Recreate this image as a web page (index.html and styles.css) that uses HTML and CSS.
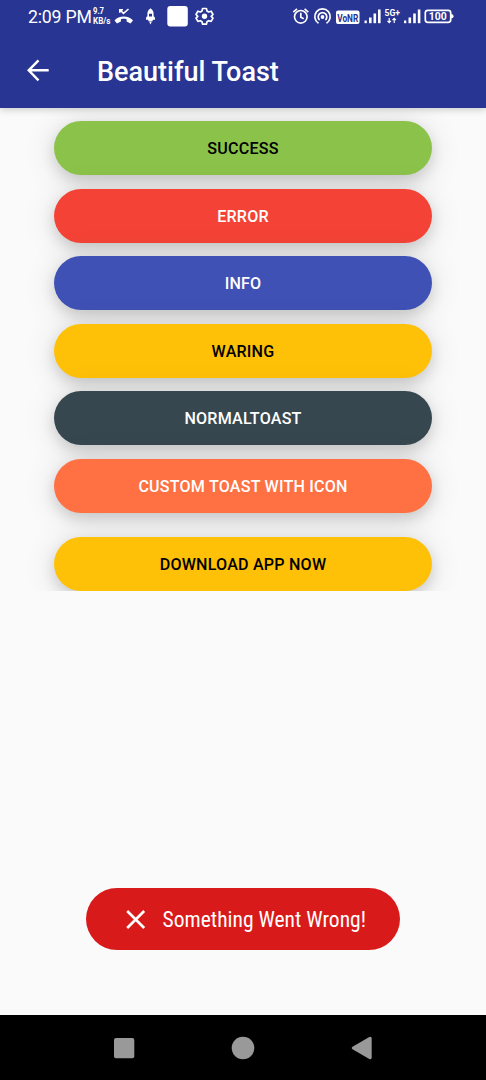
FILE: index.html
```html
<!DOCTYPE html>
<html lang="en">
<head>
<meta charset="utf-8">
<title>Beautiful Toast</title>
<link rel="stylesheet" href="styles.css">
</head>
<body>
<div class="screen">
  <header class="top">
    <div class="status">
      <span class="clock">2:09 PM</span>
      <svg class="speed" width="19" height="34" viewBox="0 0 19 34" fill="#fff">
        <text x="0" y="14" textLength="11" lengthAdjust="spacingAndGlyphs">9.7</text>
        <text x="0" y="24" textLength="17.500" lengthAdjust="spacingAndGlyphs">KB/s</text>
      </svg>
      <svg class="notices" width="106" height="34" viewBox="0 0 106 34" fill="#fff">
        <path d="M4.500 20.500C8.500 15.300 19 15.300 23 20.500L20.500 23.600L16.600 21.500V19.300C15 18.700 12.500 18.700 10.900 19.300V21.500L7 23.600Z"/>
        <path d="M9.800 12.800V9.700H13M9.800 9.700L13.500 13.300L18.500 9" fill="none" stroke="#fff" stroke-width="1.600"/>
        <path fill-rule="evenodd" d="M40.500 8.200C43.200 10 43.600 12 43.600 14V16L45 17.800V19.700H43L42.200 21.500H38.800L38 19.700H36V17.800L37.400 16V14C37.400 12 37.800 10 40.500 8.200ZM39 13.800V16.500H42V13.800Z"/>
        <path d="M39.300 22H41.700L40.500 24.500Z"/>
        <rect x="57.300" y="6" width="20.500" height="20.500" rx="3"/>
        <path d="M92.600 8.500H96.400L97 11L98.600 12L101.100 11.200L103 14.500L101.200 16.300L103 18.100L101.100 21.400L98.600 20.700L97 21.700L96.400 24.200H92.600L92 21.700L90.400 20.700L87.900 21.400L86 18.100L87.800 16.300L86 14.500L87.900 11.200L90.400 12L92 11Z" fill="none" stroke="#fff" stroke-width="1.700" stroke-linejoin="round"/>
        <circle cx="94.500" cy="16.300" r="2.700"/>
      </svg>
      <svg class="signals" width="166" height="34" viewBox="290 0 166 34" fill="#fff">
        <g fill="none" stroke="#fff" stroke-width="1.700">
          <circle cx="300.800" cy="16.800" r="6.300"/>
          <path d="M300.800 12.800V17.300L303.700 18.800M293.300 12.100L297 8.900M308.300 12.100L304.600 8.900"/>
          <path d="M318.500 23.200A7.700 7.700 0 1 1 326.500 23.200M319.600 20A4.300 4.300 0 1 1 325.400 20"/>
        </g>
        <circle cx="322.500" cy="17" r="1.900"/>
        <rect x="336" y="10.500" width="23.500" height="13.500" rx="2"/>
        <text class="vonr" x="337.200" y="21.500" textLength="21" lengthAdjust="spacingAndGlyphs">VoNR</text>
        <rect x="364.500" y="20.500" width="2.300" height="2.700"/><rect x="369" y="17.500" width="2.600" height="5.700"/><rect x="373.500" y="13.500" width="2.600" height="9.700"/><rect x="378" y="9.500" width="2.600" height="13.700"/>
        <text class="gen" x="384.500" y="16.300" textLength="15.500" lengthAdjust="spacingAndGlyphs">5G+</text>
        <path d="M389.200 18V22.500M387.500 20.800L389.200 22.700L390.900 20.800M394.200 23V18.500M392.500 20.200L394.200 18.300L395.900 20.200" fill="none" stroke="#fff" stroke-width="1.200"/>
        <rect x="404" y="20.500" width="2.300" height="2.700"/><rect x="408.500" y="17.500" width="2.600" height="5.700"/><rect x="413.200" y="13.500" width="2.600" height="9.700"/><rect x="417.800" y="9.500" width="2.600" height="13.700"/>
        <rect x="425.300" y="10.300" width="25.400" height="12" rx="2.500" fill="none" stroke="#fff" stroke-width="1.700"/>
        <path d="M451 14.300H452Q453.500 14.300 453.500 16.300T452 18.300H451Z"/>
        <text class="level" x="428.800" y="20.200" textLength="18" lengthAdjust="spacingAndGlyphs">100</text>
      </svg>
    </div>
    <div class="appbar">
      <svg class="back" width="24" height="24" viewBox="0 0 24 24" fill="none" stroke="#fff" stroke-width="2.400"><path d="M22.700 12.300H3M12.500 2.300L2.700 12.300L12.500 22.300"/></svg>
      <h1 class="title">Beautiful Toast</h1>
    </div>
  </header>
  <main class="content">
    <div class="buttons">
      <button class="btn success">SUCCESS</button>
      <button class="btn error">ERROR</button>
      <button class="btn info">INFO</button>
      <button class="btn warning">WARING</button>
      <button class="btn normal">NORMALTOAST</button>
      <button class="btn custom">CUSTOM TOAST WITH ICON</button>
      <button class="btn warning download">DOWNLOAD APP NOW</button>
    </div>
    <div class="toast">
      <svg class="cross" width="20" height="20" viewBox="0 0 20 20" fill="none" stroke="#fff" stroke-width="2.600"><path d="M1.200 2L18.200 19M18.200 2L1.200 19"/></svg>
      <svg class="message" width="220" height="40" viewBox="0 0 220 40"><text x="0.500" y="28" textLength="203.500" lengthAdjust="spacingAndGlyphs">Something Went Wrong!</text></svg>
    </div>
  </main>
  <nav class="nav">
    <svg width="24" height="24" viewBox="0 0 24 24"><rect x="2" y="2" width="20.300" height="20.300" rx="2"/></svg>
    <svg width="24" height="24" viewBox="0 0 24 24"><circle cx="12" cy="12" r="11.300"/></svg>
    <svg width="24" height="24" viewBox="0 0 24 24"><path d="M2.500 10.800L19.300 1Q21.700 0 21.700 2.500V21.500Q21.700 24 19.300 23L2.500 13.200Q.8 12 2.500 10.800Z"/></svg>
  </nav>
</div>
</body>
</html>
```
FILE: styles.css
```css
* { box-sizing: border-box; }

body {
  margin: 0;
  font-family: Roboto, "Liberation Sans", sans-serif;
}

.screen {
  display: flex;
  flex-direction: column;
  width: 486px;
  height: 1080px;
  background: #fafafa;
}

.top {
  height: 108px;
  background: #283593;
  color: #fff;
  box-shadow: 0 2px 7px rgba(0, 0, 0, .18);
}

.status {
  display: flex;
  height: 34px;
  padding-left: 28px;
}

.clock {
  width: 65px;
  font-size: 17.700px;
  letter-spacing: -.2px;
  line-height: 34px;
  white-space: nowrap;
}

.speed {
  margin-right: -2px;
  font-size: 8.500px;
  font-weight: 700;
}

.signals { margin-left: 74px; }

.vonr { font-size: 11px; font-weight: 700; fill: #283593; }
.gen { font-size: 9px; font-weight: 700; }
.level { font-size: 11px; font-weight: 700; }

.appbar {
  display: flex;
  align-items: center;
  height: 74px;
  padding-left: 26px;
}

.back { margin-bottom: 2px; }

.title {
  margin: 2px 0 0 47px;
  font-size: 27px;
  font-weight: 500;
  line-height: 36px;
}

.content {
  display: flex;
  flex: 1;
  flex-direction: column;
  align-items: center;
}

.buttons {
  display: flex;
  flex-direction: column;
  gap: 13.500px;
  width: 486px;
  height: 483px;
  padding: 13.400px 54px 0;
  overflow: hidden;
}

.btn {
  flex: none;
  height: 54px;
  padding: 2px 0 0;
  border: 0;
  border-radius: 27px;
  color: #fff;
  font: 500 16.100px/52px Roboto, "Liberation Sans", sans-serif;
  letter-spacing: .2px;
  box-shadow: 0 6px 14px rgba(0, 0, 0, .13), 0 3px 32px rgba(0, 0, 0, .13);
}

.success { background: #8bc34a; color: #000; }
.error { background: #f44336; }
.info { background: #3f51b5; }
.warning { background: #ffc107; color: #000; }
.normal { background: #37474f; }
.custom { background: #ff7043; }
.download { margin-top: 10.800px; }

.toast {
  display: flex;
  align-items: center;
  width: 314px;
  height: 62px;
  margin-top: 297px;
  padding-left: 40px;
  border-radius: 31px;
  background: #d91a1a;
}

.message {
  margin-left: 16px;
  font-family: "Roboto Condensed", Roboto, sans-serif;
  font-size: 22px;
  fill: #fff;
}

.nav {
  display: flex;
  justify-content: space-between;
  align-items: center;
  height: 65px;
  padding: 0 112px;
  background: #000;
  fill: #999;
}
```
